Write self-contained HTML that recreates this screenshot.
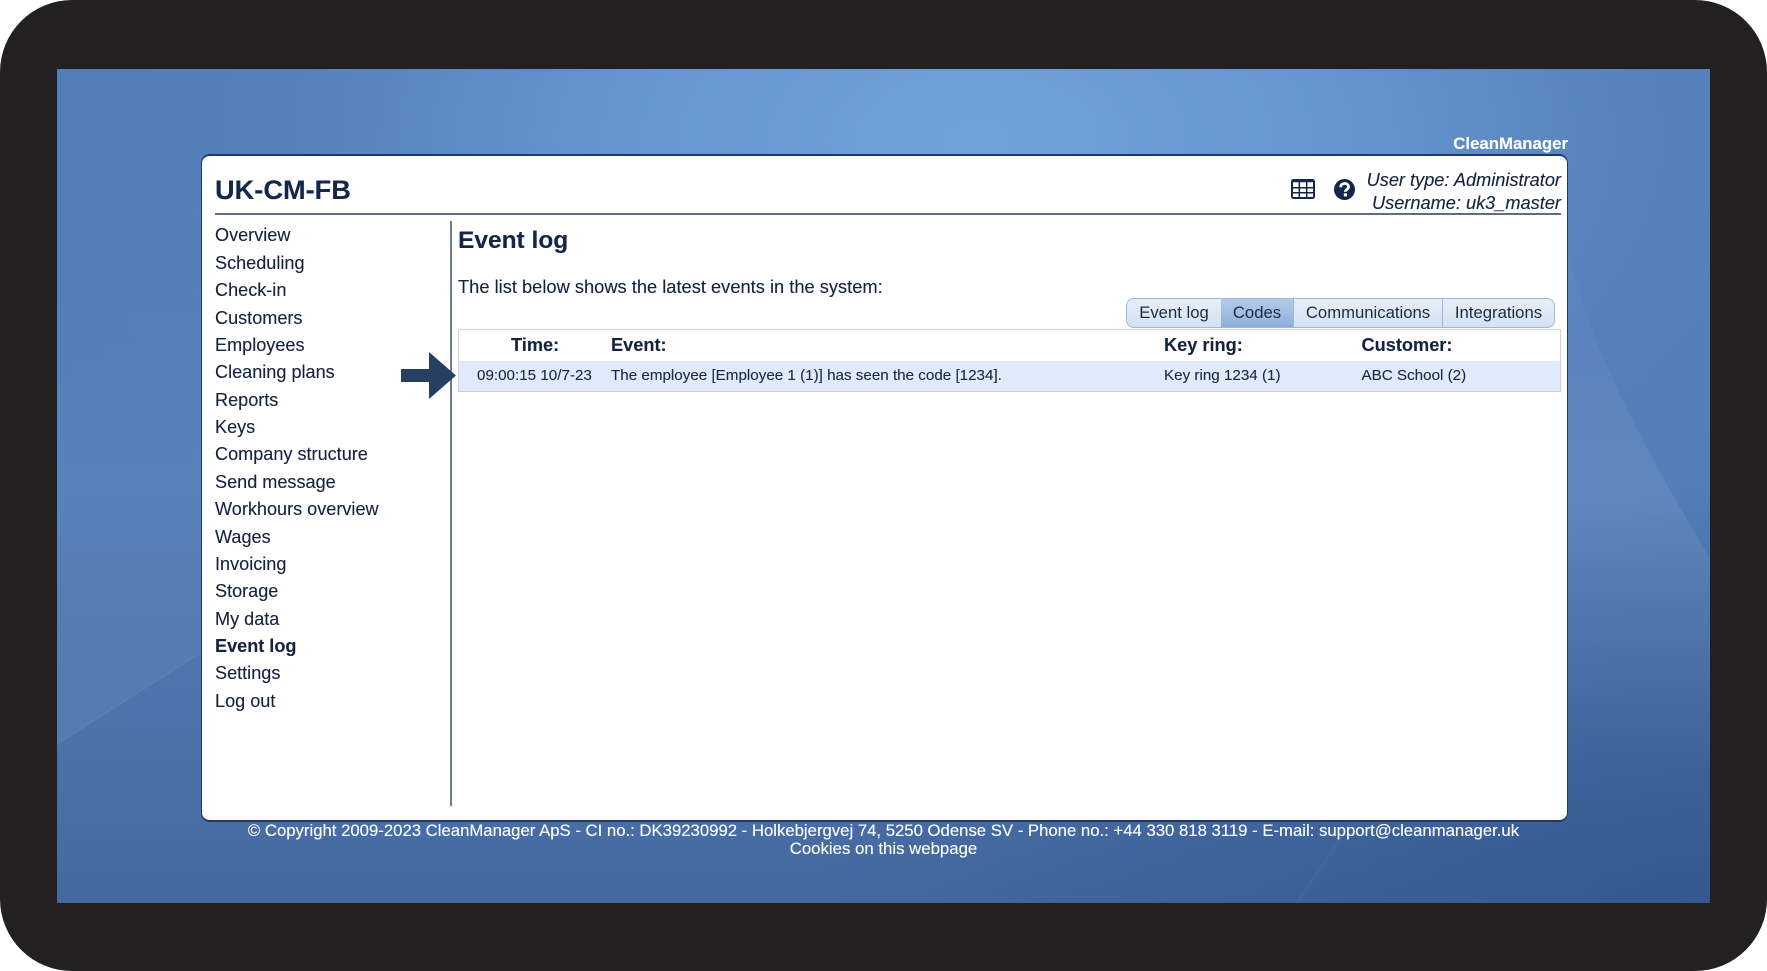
<!DOCTYPE html>
<html><head><meta charset="utf-8"><title>CleanManager</title>
<style>
html,body{margin:0;padding:0;background:#fff}
#o{position:relative;width:1767px;height:971px;overflow:hidden;font-family:"Liberation Sans",sans-serif;color:#14233f}
#f{position:absolute;left:0;top:0;width:1767px;height:971px;background:#222021;border-radius:72px}
#s{position:absolute;left:57px;top:69px;width:1653px;height:834px;overflow:hidden;
background:radial-gradient(ellipse 900px 420px at 100% 100%,rgba(47,82,136,.72) 0%,rgba(47,82,136,.32) 55%,rgba(47,82,136,0) 100%),radial-gradient(ellipse 1000px 560px at 920px 70px,#72a2da 0%,#6695cf 35%,rgba(86,128,186,.95) 70%,rgba(80,122,180,0) 100%),linear-gradient(180deg,#527db7 0%,#537eb7 50%,#4a70a8 85%,#44699f 100%)}
#s svg{position:absolute;left:0;top:0}
.t{position:absolute;white-space:nowrap;line-height:22px;height:22px;-webkit-text-stroke:.12px currentColor}
#c{position:absolute;left:201px;top:154px;width:1365px;height:664px;background:#fff;border:1.5px solid #1f3a66;border-top-width:2px;border-bottom-width:2px;border-radius:9px;box-sizing:content-box}
.n{font-size:18.1px;left:215px;color:#14233f}
.h{font-size:18.2px;font-weight:bold;color:#14233f}
.r{font-size:15.2px;color:#1c2a42}
.tab{position:absolute;top:298px;height:28px;line-height:28px;text-align:center;font-size:16.7px;color:#1d2c46;background:linear-gradient(180deg,#e6eef8,#d5e2f2);border:1px solid #9cb8de;border-left:none;box-sizing:content-box}
</style></head><body>
<div id="o">
<div id="f"></div>
<div id="s">
<svg width="1653" height="834"><defs>
<linearGradient id="g1" x1="0" y1="0" x2="0" y2="1"><stop offset="0" stop-color="#a8c4e6" stop-opacity="0"/><stop offset="1" stop-color="#a8c4e6" stop-opacity=".1"/></linearGradient>
<linearGradient id="g2" x1="0" y1="0" x2="0" y2="1"><stop offset="0" stop-color="#a0bde2" stop-opacity=".03"/><stop offset=".4" stop-color="#a0bde2" stop-opacity=".16"/><stop offset=".8" stop-color="#a0bde2" stop-opacity="0"/></linearGradient>
</defs>
<path d="M0 675L150 580L150 200L0 200Z" fill="url(#g1)"/>
<path d="M0 675L150 580" stroke="#a8c4e6" stroke-opacity=".1" stroke-width="1.5" fill="none"/>
<path d="M1511 182C1525 240 1550 320 1653 489L1653 834L1511 834Z" fill="url(#g2)"/>
<path d="M1240 834L1300 745" stroke="#8aa9d4" stroke-opacity=".08" stroke-width="2" fill="none"/>
</svg>
</div>
<div id="c"></div>

<div class="t" style="right:199px;top:133px;font-size:16.8px;font-weight:bold;color:#fff">CleanManager</div>
<div class="t" style="left:215px;top:178px;font-size:27.2px;font-weight:bold;line-height:24px;height:24px;color:#14264a">UK-CM-FB</div>

<svg style="position:absolute;left:1291px;top:179px" width="24" height="20" viewBox="0 0 24 20"><rect x="1" y="1" width="22" height="18" rx="1.5" fill="#fff" stroke="#14264a" stroke-width="2"/><path d="M1 2.5H23M1 8.8H23M1 13.8H23M8.3 3V19M15.7 3V19" fill="none" stroke="#14264a" stroke-width="1.5"/></svg>
<svg style="position:absolute;left:1334px;top:179px" width="21" height="21" viewBox="0 0 21 21"><circle cx="10.5" cy="10.5" r="10.5" fill="#14264a"/><path d="M6.7 8.2C6.7 5.8 8.4 4.5 10.6 4.5C12.8 4.5 14.5 5.8 14.5 7.9C14.5 10.4 11.4 10.5 11.4 12.7" fill="none" stroke="#fff" stroke-width="2.8"/><rect x="9.8" y="14.3" width="3.1" height="3.1" fill="#fff"/></svg>

<div class="t" style="right:206px;top:169px;font-size:18.2px;font-style:italic">User type: Administrator</div>
<div class="t" style="right:206px;top:191.5px;font-size:18.2px;font-style:italic">Username: uk3_master</div>
<div style="position:absolute;left:215px;top:213px;width:1346px;height:1.5px;background:#5d6d88"></div>
<div style="position:absolute;left:450px;top:221px;width:1.5px;height:585px;background:#6c7d96"></div>

<div class="t n" style="top:224.4px">Overview</div>
<div class="t n" style="top:251.8px">Scheduling</div>
<div class="t n" style="top:279.1px">Check-in</div>
<div class="t n" style="top:306.5px">Customers</div>
<div class="t n" style="top:333.9px">Employees</div>
<div class="t n" style="top:361.3px">Cleaning plans</div>
<div class="t n" style="top:389px">Reports</div>
<div class="t n" style="top:416px">Keys</div>
<div class="t n" style="top:443.4px">Company structure</div>
<div class="t n" style="top:470.7px">Send message</div>
<div class="t n" style="top:498.1px">Workhours overview</div>
<div class="t n" style="top:525.5px">Wages</div>
<div class="t n" style="top:552.8px">Invoicing</div>
<div class="t n" style="top:580.4px">Storage</div>
<div class="t n" style="top:608px">My data</div>
<div class="t n" style="top:634.9px;font-weight:bold">Event log</div>
<div class="t n" style="top:662.3px">Settings</div>
<div class="t n" style="top:689.7px">Log out</div>

<div class="t" style="left:458px;top:229px;font-size:24.5px;font-weight:bold;line-height:24px;height:24px;color:#14264a">Event log</div>
<div class="t" style="left:458px;top:276px;font-size:18.3px">The list below shows the latest events in the system:</div>

<div class="tab" style="left:1126px;width:94px;border-left:1px solid #9cb8de;border-radius:8px 0 0 8px">Event log</div>
<div class="tab" style="left:1221px;width:72px;background:linear-gradient(180deg,#b4cbea,#8fb0dc)">Codes</div>
<div class="tab" style="left:1294px;width:148px">Communications</div>
<div class="tab" style="left:1443px;width:111px;border-radius:0 8px 8px 0">Integrations</div>

<div style="position:absolute;left:458px;top:329px;width:1103px;height:63px;border:1px solid #cfd3d9;border-bottom:1px solid #c6d3e2;box-sizing:border-box"></div>
<div style="position:absolute;left:459px;top:360.5px;width:1101px;height:30.5px;background:#dfeafb"></div>

<div class="t h" style="left:511px;top:334px">Time:</div>
<div class="t h" style="left:611px;top:334px">Event:</div>
<div class="t h" style="left:1164px;top:334px">Key ring:</div>
<div class="t h" style="left:1361.5px;top:334px">Customer:</div>
<div class="t r" style="left:477px;top:365px">09:00:15 10/7-23</div>
<div class="t r" style="left:611px;top:365px">The employee [Employee 1 (1)] has seen the code [1234].</div>
<div class="t r" style="left:1164px;top:365px">Key ring 1234 (1)</div>
<div class="t r" style="left:1361.5px;top:365px">ABC School (2)</div>

<svg style="position:absolute;left:400px;top:350px" width="60" height="52"><path d="M1 19H29V2L56 25.5L29 49V32H1Z" fill="#263f63"/></svg>

<div class="t" style="left:0;width:1767px;text-align:center;top:820px;font-size:16.73px;color:#fff">© Copyright 2009-2023 CleanManager ApS - CI no.: DK39230992 - Holkebjergvej 74, 5250 Odense SV - Phone no.: +44 330 818 3119 - E-mail: support@cleanmanager.uk</div>
<div class="t" style="left:0;width:1767px;text-align:center;top:838px;font-size:16.8px;color:#fff">Cookies on this webpage</div>
</div>
</body></html>
